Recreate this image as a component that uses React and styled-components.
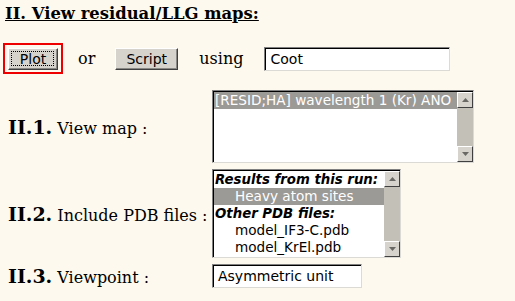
import React from "react";
import styled, { createGlobalStyle } from "styled-components";

const Global = createGlobalStyle`
  html, body {
    margin: 0;
    padding: 0;
    background: #fdf9ee;
  }
  body {
    font-family: "DejaVu Serif", serif;
    color: #000;
  }
`;

const Page = styled.div`
  width: 515px;
  height: 301px;
  overflow: hidden;
  padding: 4px 0 0 0;
  box-sizing: border-box;
`;

const Title = styled.h3`
  margin: 0 0 0 5px;
  font-family: "DejaVu Serif", serif;
  font-size: 16.4px;
  font-weight: bold;
  text-decoration: underline;
  line-height: 20px;
`;

const ActionRow = styled.div`
  display: flex;
  align-items: center;
  margin-top: 17px;
  padding-left: 3px;
  height: 35px;
`;

const FocusBox = styled.div`
  border: 2px solid #ee0000;
  padding: 4px 3px;
  height: 31px;
  box-sizing: border-box;
  display: flex;
  align-items: center;
`;

const Button = styled.button`
  font-family: "DejaVu Sans", sans-serif;
  font-size: 14px;
  color: #000;
  background: #d6d3cc;
  height: 22px;
  width: ${(p) => p.w}px;
  padding: 0;
  box-sizing: border-box;
  border: 1px solid;
  border-color: #ffffff #404040 #404040 #ffffff;
  box-shadow: inset -1px -1px 0 #8a8884;
  position: relative;
  line-height: 18px;
  &::after {
    content: "";
    display: ${(p) => (p.focused ? "block" : "none")};
    position: absolute;
    left: 2px;
    top: 2px;
    right: 3px;
    bottom: 3px;
    border: 1px dotted #000;
  }
`;

const Word = styled.span`
  font-family: "DejaVu Serif", serif;
  font-size: 16px;
  margin: 0 ${(p) => p.r}px 0 ${(p) => p.l}px;
`;

const Field = styled.div`
  font-family: "DejaVu Sans", sans-serif;
  font-size: 14px;
  background: #fff;
  width: ${(p) => p.w}px;
  height: ${(p) => p.h}px;
  box-sizing: border-box;
  border: 1px solid;
  border-color: #808080 #dcdad4 #dcdad4 #808080;
  box-shadow: inset 1px 1px 0 #000;
  padding: 0 5px;
  display: flex;
  align-items: center;
`;

const Form = styled.div`
  display: grid;
  grid-template-columns: 204px auto;
  row-gap: 6px;
  margin-top: 14px;
  padding-left: 8px;
  align-items: center;
`;

const Label = styled.div`
  font-family: "DejaVu Serif", serif;
  font-size: 16px;
  white-space: nowrap;
  b {
    font-size: 19px;
    font-weight: bold;
  }
`;

const ListBox = styled.div`
  display: flex;
  background: #fff;
  width: ${(p) => p.w}px;
  height: ${(p) => p.h}px;
  box-sizing: border-box;
  border: 1px solid;
  border-color: #808080 #dcdad4 #dcdad4 #808080;
  box-shadow: inset 1px 1px 0 #000;
  padding: 1px 0 0 1px;
`;

const Options = styled.div`
  flex: 1;
  overflow: hidden;
  font-family: "DejaVu Sans", sans-serif;
  font-size: 13.6px;
`;

const Option = styled.div`
  height: 17px;
  line-height: 17px;
  white-space: nowrap;
  padding-left: ${(p) => (p.indent ? 21 : 1)}px;
  background: ${(p) => (p.selected ? "#9c9a96" : "transparent")};
  color: ${(p) => (p.selected ? "#fff" : "#000")};
  font-weight: ${(p) => (p.group ? "bold" : "normal")};
  font-style: ${(p) => (p.group ? "italic" : "normal")};
  font-size: ${(p) => (p.group ? 13.3 : 13.6)}px;
`;

const Scrollbar = styled.div`
  width: 16px;
  background: #c3c0b8;
  display: flex;
  flex-direction: column;
  justify-content: space-between;
`;

const ArrowBtn = styled.div`
  height: 16px;
  box-sizing: border-box;
  background: #d6d3cc;
  border: 1px solid;
  border-color: #ffffff #404040 #404040 #ffffff;
  display: flex;
  align-items: center;
  justify-content: center;
`;

const Arrow = ({ down }) => (
  <ArrowBtn>
    <svg width="7" height="4" viewBox="0 0 7 4">
      <polygon
        points={down ? "0,0 7,0 3.5,4" : "0,4 7,4 3.5,0"}
        fill="#6a6864"
      />
    </svg>
  </ArrowBtn>
);

export default function App() {
  return (
    <Page>
      <Global />
      <Title>II. View residual/LLG maps:</Title>
      <ActionRow>
        <FocusBox>
          <Button w={50} focused>
            Plot
          </Button>
        </FocusBox>
        <Word l={15} r={20}>
          or
        </Word>
        <Button w={63}>Script</Button>
        <Word l={21} r={21}>
          using
        </Word>
        <Field w={186} h={24}>
          Coot
        </Field>
      </ActionRow>
      <Form>
        <Label>
          <b>II.1.</b> View map :
        </Label>
        <ListBox w={262} h={73}>
          <Options>
            <Option selected>[RESID;HA] wavelength 1 (Kr) ANO</Option>
          </Options>
          <Scrollbar>
            <Arrow />
            <Arrow down />
          </Scrollbar>
        </ListBox>

        <Label>
          <b>II.2.</b> Include PDB files :
        </Label>
        <ListBox w={189} h={89}>
          <Options>
            <Option group>Results from this run:</Option>
            <Option indent selected>
              Heavy atom sites
            </Option>
            <Option group>Other PDB files:</Option>
            <Option indent>model_IF3-C.pdb</Option>
            <Option indent>model_KrEl.pdb</Option>
          </Options>
          <Scrollbar>
            <Arrow />
            <Arrow down />
          </Scrollbar>
        </ListBox>

        <Label>
          <b>II.3.</b> Viewpoint :
        </Label>
        <Field w={150} h={24}>
          Asymmetric unit
        </Field>
      </Form>
    </Page>
  );
}
